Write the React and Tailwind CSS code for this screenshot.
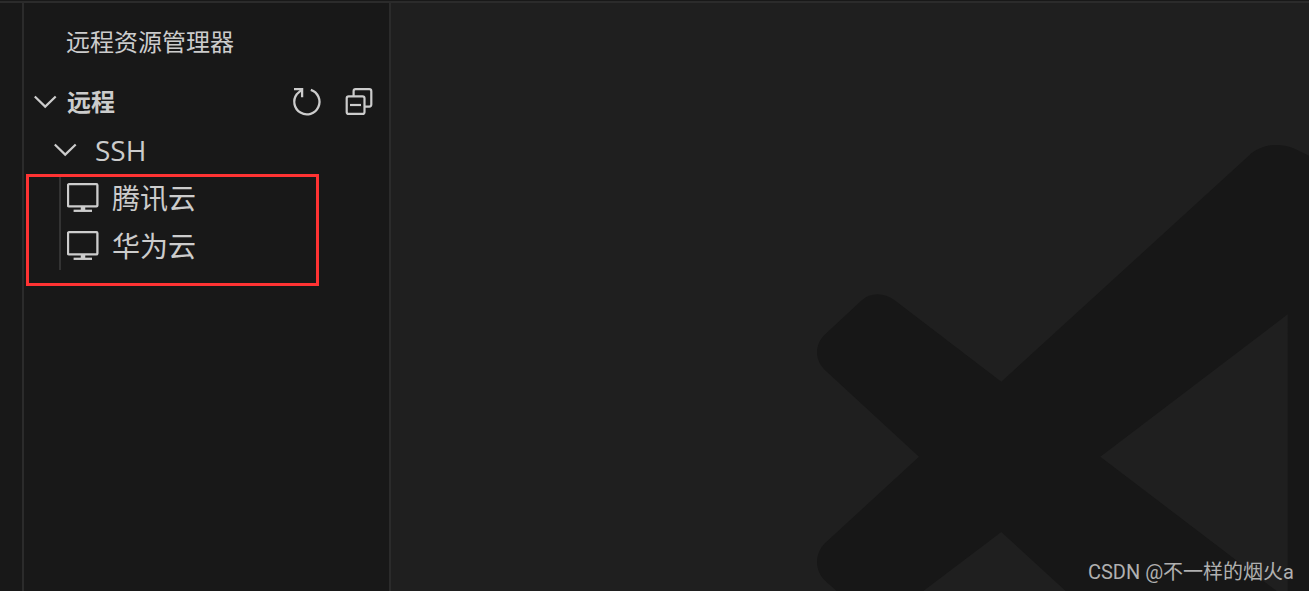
const hosts = ["腾讯云", "华为云"];

function ChevronDown() {
  return (
    <svg viewBox="0 0 32 32" className="size-8" fill="none" stroke="currentColor" strokeWidth="2.2">
      <path d="M5.8 10.5 16.2 20.6 26.7 10.5" />
    </svg>
  );
}

function RefreshIcon() {
  return (
    <svg viewBox="0 0 32 32" className="size-8" fill="none" stroke="currentColor" strokeWidth="2.3">
      <path d="M19.8 3.8A12.6 12.6 0 1 1 5.8 8.2L10.4 4" />
      <path d="M3 3.2H11.1V11.3" />
    </svg>
  );
}

function CollapseAllIcon() {
  return (
    <svg viewBox="0 0 32 32" className="size-8" fill="none" stroke="currentColor" strokeWidth="2.2">
      <path d="M10.6 10V5.2a2 2 0 0 1 2-2H26.3a2 2 0 0 1 2 2V18.6a2 2 0 0 1-2 2H22" />
      <rect x="3.7" y="10.3" width="17.8" height="17.6" rx="2" />
      <path d="M7 19H18" />
    </svg>
  );
}

function MonitorIcon() {
  return (
    <svg viewBox="0 0 32 32" className="size-8" fill="none" stroke="currentColor" strokeWidth="2.3">
      <rect x="1" y="2.2" width="29.4" height="22.2" rx="1" />
      <path d="M16 24V29" strokeWidth="4.5" />
      <path d="M6.6 28.8H25" />
    </svg>
  );
}

function Logo() {
  return (
    <svg
      viewBox="800 130 509 461"
      className="w-[509px] h-[461px] shrink-0"
      fill="#171717"
      aria-hidden="true"
    >
      <path d="M826 333.5 861.5 300.5C871 292 884 292.5 895 300.5L1001.3 381.7 1248.5 156C1261 144.500 1277 142 1293.500 148.200L1309 155.700V591H1287.700V314.300L1100.300 456.700 1276.700 591H1065.700L1001.300 532 923.300 591H836.700L826 581.500C814 571 814 553 826 542.300L919 456.700 826 371C814 360.500 814 344 826 333.500Z" />
    </svg>
  );
}

function Sidebar() {
  return (
    <aside className="w-[367px] shrink-0 border-r-2 border-[#2b2b2b]">
      <h1 className="flex h-[75px] items-center pt-0.5 pl-[42px] text-2xl">远程资源管理器</h1>
      <div className="flex h-12 items-center justify-between pr-[14px] pl-[5px]">
        <button className="flex items-center gap-[6px] text-2xl font-bold">
          <ChevronDown />
          远程
        </button>
        <div className="flex gap-5">
          <button aria-label="刷新">
            <RefreshIcon />
          </button>
          <button aria-label="全部折叠">
            <CollapseAllIcon />
          </button>
        </div>
      </div>
      <button className="flex h-12 items-center gap-[14px] pl-[25px] text-[28px]">
        <ChevronDown />
        SSH
      </button>
      <div className="relative">
        <ul className="ml-[35px] border-l-2 border-[#333333] text-[28px]">
          {hosts.map((host) => (
            <li key={host} className="flex h-12 items-center gap-[13px] pl-[6px]">
              <MonitorIcon />
              {host}
            </li>
          ))}
        </ul>
        {/* highlight around the hosts */}
        <div className="absolute top-0 right-[70px] -bottom-4 left-[2px] border-[3px] border-[#ff3333]" />
      </div>
    </aside>
  );
}

export default function App() {
  return (
    <div className="flex min-h-screen flex-col bg-[#181818] pt-px font-['Open_Sans','Noto_Sans_CJK_SC',sans-serif] text-[#cccccc]">
      <div className="flex flex-1 border-t-2 border-[#2b2b2b]">
        <div className="w-6 shrink-0 border-r-2 border-[#2b2b2b]" />
        <Sidebar />
        <main className="relative flex min-w-0 flex-1 items-end justify-end overflow-hidden bg-[#1f1f1f]">
          <Logo />
          <p className="absolute right-[15px] bottom-[5px] font-['Roboto','Noto_Sans_CJK_SC',sans-serif] text-xl text-[#b0b0b0]">
            CSDN @不一样的烟火a
          </p>
        </main>
      </div>
    </div>
  );
}
